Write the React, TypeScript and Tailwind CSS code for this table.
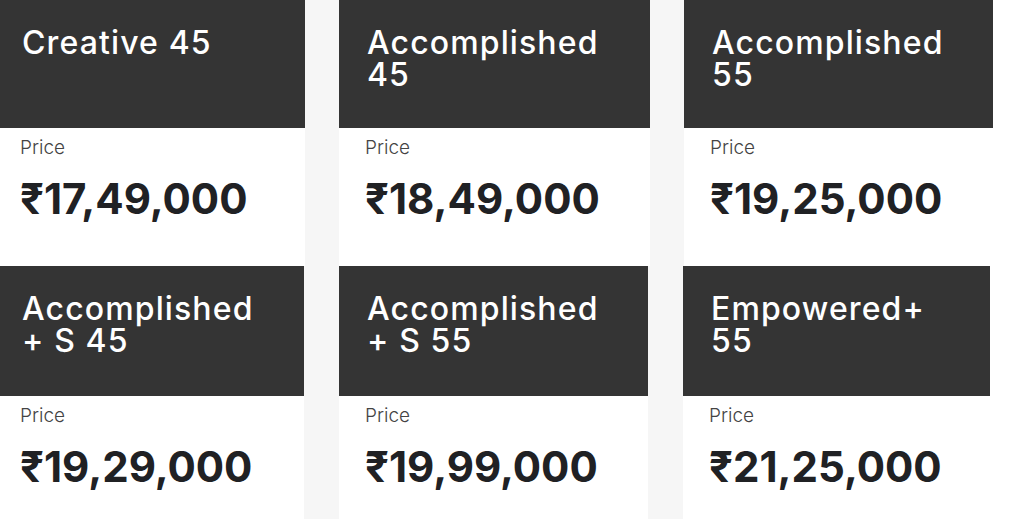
import React from 'react';

type Plan = {
  name: string[];
  price: string;
};

const topRow: Plan[] = [
  { name: ['Creative 45'], price: '₹17,49,000' },
  { name: ['Accomplished', '45'], price: '₹18,49,000' },
  { name: ['Accomplished', '55'], price: '₹19,25,000' },
];

const bottomRow: Plan[] = [
  { name: ['Accomplished', '+ S 45'], price: '₹19,29,000' },
  { name: ['Accomplished', '+ S 55'], price: '₹19,99,000' },
  { name: ['Empowered+', '55'], price: '₹21,25,000' },
];

function PlanCard({ plan, headerClass, bodyClass }: { plan: Plan; headerClass: string; bodyClass: string }) {
  return (
    <div className="flex flex-col bg-white">
      <div className={`bg-[#343434] pl-[28px] pr-4 ${headerClass}`}>
        <h3 className="text-[32px] leading-[32px] font-medium tracking-[0.035em] text-white">
          {plan.name.map((line) => (
            <span key={line} className="block">
              {line}
            </span>
          ))}
        </h3>
      </div>
      <div className={`pl-[26px] ${bodyClass}`}>
        <p className="text-[19px] leading-[22px] font-light text-[#444444]">Price</p>
        <p className="mt-[16px] text-[42px] leading-[48px] font-bold text-[#202124]">{plan.price}</p>
      </div>
    </div>
  );
}

export default function App() {
  return (
    <div
      className="h-[519px] w-[1024px] overflow-hidden bg-white"
      style={{ fontFamily: 'Inter, "Noto Sans", sans-serif' }}
    >
      <div className="-ml-[6px] flex flex-col">
        <div className="grid w-fit grid-cols-[311px_311px_309px] gap-x-[34px] bg-[#f6f6f6]">
          {topRow.map((plan) => (
            <PlanCard key={plan.price} plan={plan} headerClass="h-[128px] pt-[27px]" bodyClass="h-[138px] pt-[9px]" />
          ))}
        </div>
        <div className="grid w-fit grid-cols-[310px_309px_307px] gap-x-[35px] bg-[#f6f6f6]">
          {bottomRow.map((plan) => (
            <PlanCard key={plan.price} plan={plan} headerClass="h-[130px] pt-[27px]" bodyClass="h-[130px] pt-[9px]" />
          ))}
        </div>
      </div>
    </div>
  );
}
